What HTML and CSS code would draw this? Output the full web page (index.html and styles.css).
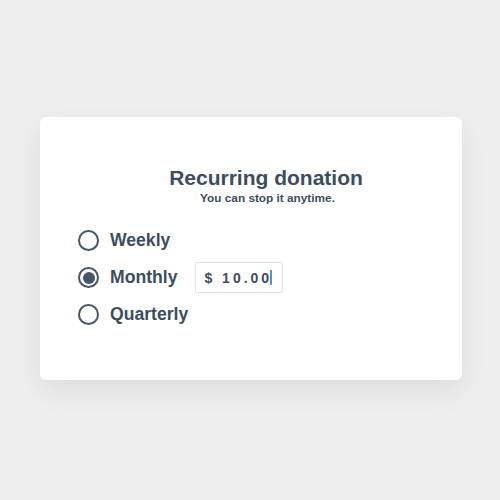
FILE: index.html
```html
<!DOCTYPE html>
<html lang="en">
  <head>
    <meta charset="UTF-8" />
    <meta name="viewport" content="width=device-width, initial-scale=1.0" />
    <title>Recurring donation</title>
    <link rel="stylesheet" href="styles.css">
  </head>
  <body>
    <div class="card">
      <div class="header">
        <h2>Recurring donation</h2>
        <p class="subtitle">You can stop it anytime.</p>
      </div>

      <div class="options">
        <label class="option">
          <span class="radio"></span>
          <span class="label">Weekly</span>
        </label>
        <label class="option">
          <span class="radio checked"></span>
          <span class="label">Monthly</span>
          <span class="amount">$ 10.00<span class="caret"></span></span>
        </label>
        <label class="option">
          <span class="radio"></span>
          <span class="label">Quarterly</span>
        </label>
      </div>
    </div>
  </body>
</html>
```

FILE: styles.css
```css
* {
  box-sizing: border-box;
}

body {
  font-family: "Liberation Sans", Arial, sans-serif;
  background: #eeeeee;
  margin: 0;
  padding: 117px 0 0 40px;
  height: 100vh;
  color: #3d4d61;
}

.card {
  background: #fff;
  width: 422px;
  height: 263px;
  padding: 49px 8px 0 38px;
  border-radius: 6px;
  box-shadow: 0 10px 30px rgba(0, 0, 0, 0.08);
}

.header {
  text-align: center;
}

h2 {
  margin: 0;
  font-size: 21px;
  line-height: 24px;
  font-weight: bold;
}

.subtitle {
  margin: 1px 0 0 3px;
  font-size: 11.8px;
  line-height: 14px;
  font-weight: bold;
}

.options {
  margin-top: 17px;
  display: flex;
  flex-direction: column;
}

.option {
  display: flex;
  align-items: center;
  height: 37px;
}

.radio {
  width: 21px;
  height: 21px;
  border: 2px solid #46576b;
  border-radius: 50%;
  display: flex;
  align-items: center;
  justify-content: center;
}

.radio.checked::after {
  content: "";
  width: 12px;
  height: 12px;
  border-radius: 50%;
  background: #46576b;
}

.label {
  margin-left: 11px;
  font-size: 17.6px;
  font-weight: bold;
}

.amount {
  margin-left: 18px;
  width: 88px;
  height: 31px;
  border: 1px solid #dfe3e7;
  border-radius: 2px;
  padding-left: 8px;
  display: flex;
  align-items: center;
  font-size: 14px;
  font-weight: bold;
  letter-spacing: 3px;
}

.caret {
  width: 2px;
  height: 15px;
  margin-left: -2px;
  background: #5a8ed8;
}
```
